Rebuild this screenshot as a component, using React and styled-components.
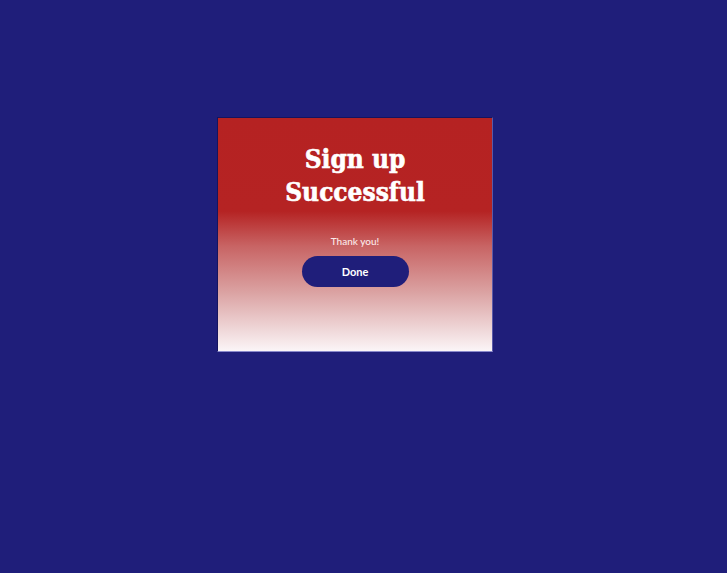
import React from "react";
import styled, { createGlobalStyle } from "styled-components";

const GlobalStyle = createGlobalStyle`
  html, body {
    margin: 0;
    padding: 0;
    background-color: #1f1e7a;
    height: 100%;
  }
  #root {
    min-height: 100%;
  }
`;

const Page = styled.div`
  width: 727px;
  height: 573px;
  background-color: #1f1e7a;
  padding: 117px 0 0 217px;
  box-sizing: border-box;
`;

const Card = styled.div`
  width: 276px;
  height: 235px;
  box-sizing: border-box;
  border: 1px solid #15145e;
  border-bottom-color: #8a8acb;
  border-right-color: #5a5aa8;
  background: linear-gradient(
    to bottom,
    #b52222 0%,
    #b52323 40%,
    #c86464 55%,
    #dba3a3 75%,
    #fbf5f7 100%
  );
  display: flex;
  flex-direction: column;
  align-items: center;
  padding-top: 25px;
`;

const Title = styled.h1`
  margin: 0;
  font-family: "DejaVu Serif Condensed", "DejaVu Serif", serif;
  font-stretch: condensed;
  font-weight: 900;
  font-size: 26px;
  line-height: 33px;
  color: #ffffff;
  text-align: center;
  -webkit-text-stroke: 0.6px #ffffff;
`;

const Message = styled.p`
  margin: 26px 0 0;
  font-family: Lato, "Liberation Sans", sans-serif;
  font-size: 10px;
  font-weight: 500;
  color: #fbeaea;
`;

const DoneButton = styled.button`
  margin-top: 9px;
  width: 107px;
  height: 31px;
  border: none;
  border-radius: 16px;
  background-color: #1f1e7a;
  color: #ffffff;
  font-family: Lato, "Liberation Sans", sans-serif;
  font-weight: 700;
  font-size: 11px;
  cursor: pointer;
`;

const App = () => {
  return (
    <>
      <GlobalStyle />
      <Page>
        <Card>
          <Title>
            Sign up
            <br />
            Successful
          </Title>
          <Message>Thank you!</Message>
          <DoneButton>Done</DoneButton>
        </Card>
      </Page>
    </>
  );
};

export default App;
